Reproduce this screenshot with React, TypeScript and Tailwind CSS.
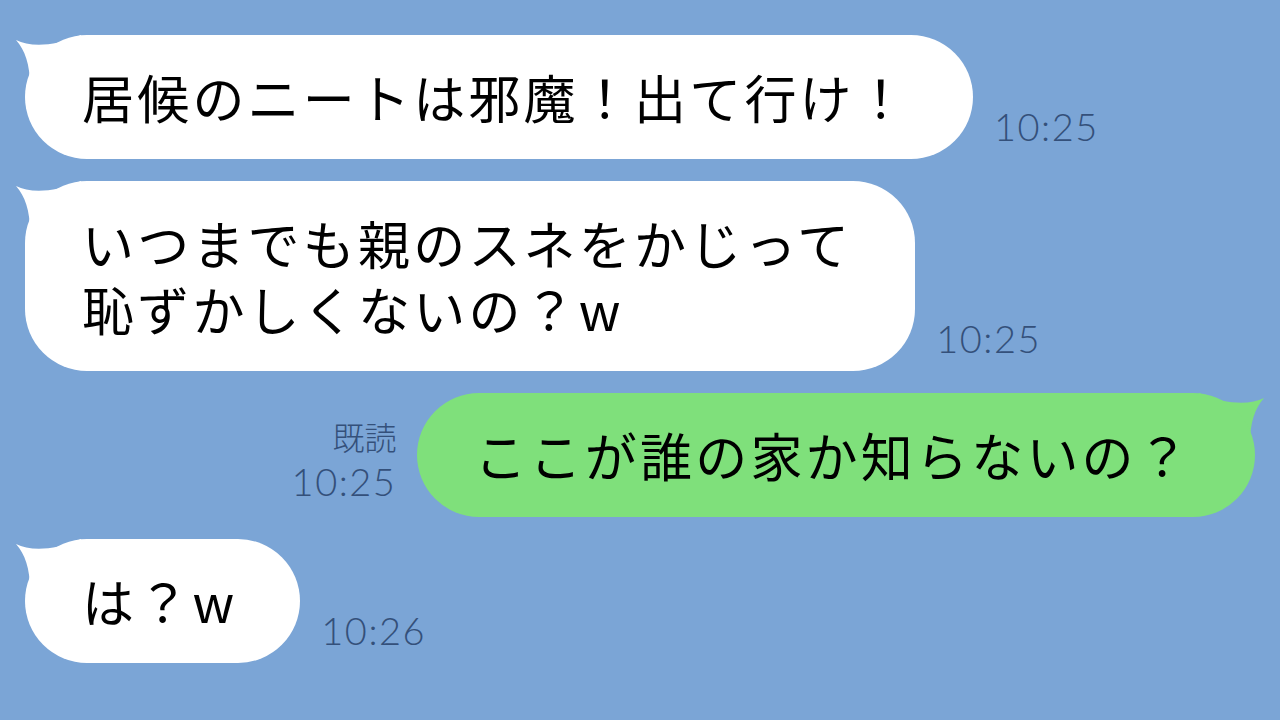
const JP = "font-['Noto_Sans_CJK_JP',sans-serif]";
const TIME = "font-['Lato','Noto_Sans',sans-serif]";

function Tail({ color, flip = false }: { color: string; flip?: boolean }) {
  return (
    <svg
      className={`absolute top-0 ${flip ? "-right-[10px] -scale-x-100" : "-left-[10px]"}`}
      width="70"
      height="50"
      viewBox="0 0 70 50"
    >
      <path d="M1 5 C15 12 38 12 66 0 L66 50 L15 50 C15 30 10 15 1 5 Z" fill={color} />
    </svg>
  );
}

function Bubble({
  lines,
  color,
  flip = false,
}: {
  lines: string[];
  color: string;
  flip?: boolean;
}) {
  return (
    <div className="relative">
      <Tail color={color} flip={flip} />
      <div
        className={`relative rounded-[62px] py-[29px] pl-[57px] pr-[63px] text-[52px] leading-[66px] tracking-[3.2px] text-black ${JP}`}
        style={{ backgroundColor: color }}
      >
        {lines.map((line) => (
          <p className="whitespace-nowrap" key={line}>
            {line}
          </p>
        ))}
      </div>
    </div>
  );
}

function Time({ children }: { children: string }) {
  return (
    <span className={`block text-[38px] font-light leading-none tracking-[1.5px] text-[#34507a] ${TIME}`}>
      {children}
    </span>
  );
}

export default function App() {
  return (
    <div className="flex h-[720px] w-[1280px] flex-col gap-[22px] overflow-hidden bg-[#7ba5d6] px-[25px] pt-[35px]">
      <div className="flex items-end gap-[21px]">
        <Bubble color="#ffffff" lines={["居候のニートは邪魔！出て行け！"]} />
        <div className="pb-[14px]">
          <Time>10:25</Time>
        </div>
      </div>

      <div className="flex items-end gap-[21px]">
        <Bubble
          color="#ffffff"
          lines={["いつまでも親のスネをかじって", "恥ずかしくないの？w"]}
        />
        <div className="pb-[14px]">
          <Time>10:25</Time>
        </div>
      </div>

      <div className="flex items-end justify-end gap-[21px]">
        <div className="flex flex-col items-end gap-[10px] pb-[17px]">
          <span className={`text-[32px] font-light leading-none text-[#34507a] ${JP}`}>既読</span>
          <Time>10:25</Time>
        </div>
        <Bubble color="#7fe07b" flip lines={["ここが誰の家か知らないの？"]} />
      </div>

      <div className="flex items-end gap-[21px]">
        <Bubble color="#ffffff" lines={["は？w"]} />
        <div className="pb-[14px]">
          <Time>10:26</Time>
        </div>
      </div>
    </div>
  );
}
